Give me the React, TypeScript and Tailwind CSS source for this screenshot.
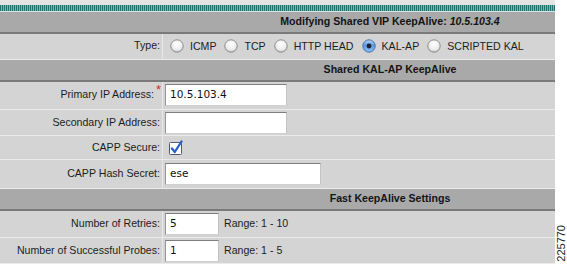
import React from "react";

const Radio = ({ checked }: { checked?: boolean }) => (
  <svg width="14" height="14" viewBox="0 0 14 14" className="shrink-0">
    <defs>
      <radialGradient id="radioOff" cx="50%" cy="35%" r="65%">
        <stop offset="0%" stopColor="#ffffff" />
        <stop offset="70%" stopColor="#ececec" />
        <stop offset="100%" stopColor="#bdbdbd" />
      </radialGradient>
      <linearGradient id="radioOn" x1="0" y1="0" x2="0" y2="1">
        <stop offset="0%" stopColor="#bcdaf8" />
        <stop offset="45%" stopColor="#5b98e3" />
        <stop offset="100%" stopColor="#8cc0f5" />
      </linearGradient>
    </defs>
    <circle
      cx="7"
      cy="7"
      r="6.2"
      fill={checked ? "url(#radioOn)" : "url(#radioOff)"}
      stroke={checked ? "#4a6fa8" : "#8d8d8d"}
      strokeWidth="1"
    />
    {checked && <circle cx="7" cy="7" r="2.4" fill="#1b2430" />}
  </svg>
);

const Checkbox = () => (
  <svg width="15" height="15" viewBox="0 0 15 15" className="shrink-0">
    <rect x="0.5" y="2.5" width="12" height="12" rx="1" fill="#ffffff" stroke="#4c5a78" />
    <path
      d="M3 8.5 L5.8 12 L12.5 1.5"
      fill="none"
      stroke="#2a5ec6"
      strokeWidth="2.3"
      strokeLinecap="round"
      strokeLinejoin="round"
    />
  </svg>
);

const Input = ({ value, width }: { value?: string; width: string }) => (
  <div
    className={`${width} h-[22px] ml-[2px] bg-white border border-t-[#7e7e7e] border-l-[#959595] border-r-[#c4c4c4] border-b-[#d0d0d0] flex items-center pl-[4px] font-['DejaVu_Sans',sans-serif] text-[10.5px] text-[#111]`}
  >
    {value}
  </div>
);

const Header = ({ children }: { children: React.ReactNode }) => (
  <div className="h-[22px] bg-[#a9a9a9] border-b-2 border-[#7a7a7a] flex items-center justify-center pl-[225px] font-bold text-[#141414]">
    {children}
  </div>
);

const Row = ({
  label,
  height,
  children,
}: {
  label: React.ReactNode;
  height: string;
  children: React.ReactNode;
}) => (
  <div className={`flex ${height} border-b border-[#ebebeb]`}>
    <div className="w-[162px] bg-[#d4d4d4] flex items-center justify-end pr-[2px] text-[#1c1c1c]">
      {label}
    </div>
    <div className="w-px bg-[#e8e8e8]" />
    <div className="flex-1 bg-[#d4d4d4] flex items-center">{children}</div>
  </div>
);

const types = ["ICMP", "TCP", "HTTP HEAD", "KAL-AP", "SCRIPTED KAL"];

export default function App() {
  return (
    <div className="flex w-[567px] h-[264px] overflow-hidden bg-white font-['Liberation_Sans',Arial,sans-serif] text-[10.6px]">
      <div className="w-[555px] flex flex-col">
        <div className="h-[5px] bg-[#e4e4e4]" />
        <div className="h-[6px] bg-[repeating-linear-gradient(90deg,#1c756e_0px,#1c756e_1px,#6fb8b0_1px,#6fb8b0_2px)]" />
        <div className="h-px bg-[#d3e6e3]" />

        <Header>
          Modifying Shared VIP KeepAlive:&nbsp;<span className="italic">10.5.103.4</span>
        </Header>

        <Row label="Type:" height="h-[26px]">
          <div className="flex items-center gap-[8px] pl-[7px]">
            {types.map((t) => (
              <div key={t} className="flex items-center gap-[6px]">
                <Radio checked={t === "KAL-AP"} />
                <span className="text-[#1c1c1c] relative top-[1px]">{t}</span>
              </div>
            ))}
          </div>
        </Row>

        <Header>Shared KAL-AP KeepAlive</Header>

        <Row
          height="h-[28px]"
          label={
            <span className="flex items-start">
              Primary IP Address:
              <span className="text-[#d42a2a] text-[13px] leading-none relative -top-[4px] ml-[2px] mr-[-1px]">*</span>
            </span>
          }
        >
          <Input value="10.5.103.4" width="w-[122px]" />
        </Row>

        <Row label="Secondary IP Address:" height="h-[27px]">
          <Input width="w-[122px]" />
        </Row>

        <Row label="CAPP Secure:" height="h-[24px]">
          <div className="pl-[6px] flex items-center">
            <Checkbox />
          </div>
        </Row>

        <Row label="CAPP Hash Secret:" height="h-[29px]">
          <Input value="ese" width="w-[156px]" />
        </Row>

        <Header>Fast KeepAlive Settings</Header>

        <Row label="Number of Retries:" height="h-[27px]">
          <Input value="5" width="w-[54px]" />
          <span className="ml-[5px] text-[#1c1c1c]">Range: 1 - 10</span>
        </Row>

        <Row label="Number of Successful Probes:" height="h-[26px]">
          <Input value="1" width="w-[54px]" />
          <span className="ml-[5px] text-[#1c1c1c]">Range: 1 - 5</span>
        </Row>
      </div>

      <div className="w-[12px] flex flex-col justify-end items-center pb-[2px]">
        <span className="[writing-mode:vertical-rl] rotate-180 text-[11px] leading-none text-[#222]">
          225770
        </span>
      </div>
    </div>
  );
}
